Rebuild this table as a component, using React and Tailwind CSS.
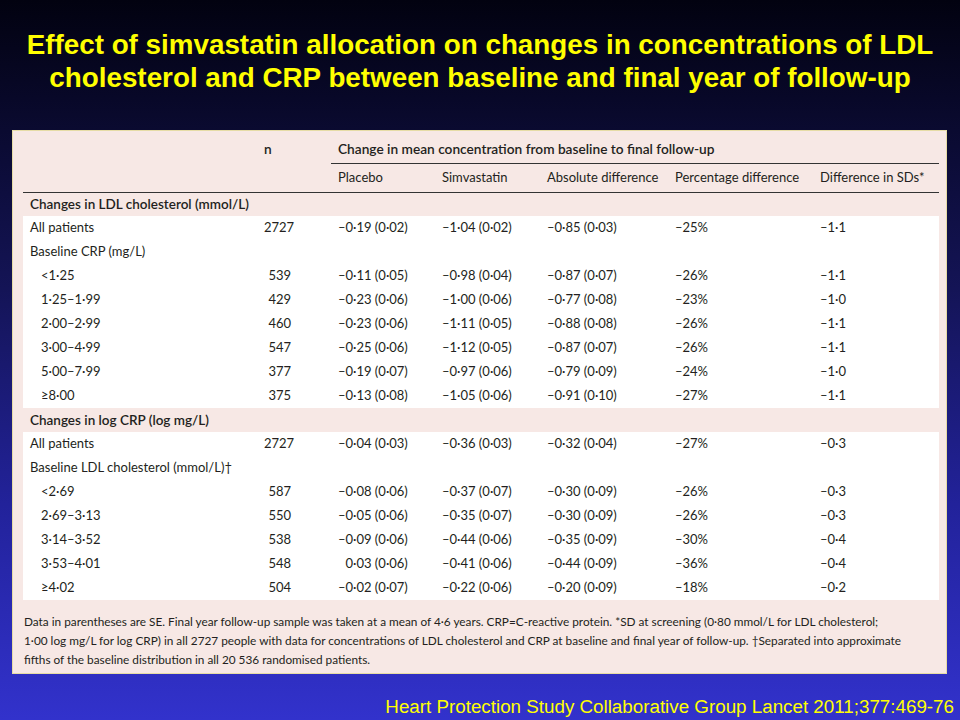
import React from "react";

const ldlRows = [
  ["<1·25", "539", "–0·11 (0·05)", "–0·98 (0·04)", "–0·87 (0·07)", "–26%", "–1·1"],
  ["1·25–1·99", "429", "–0·23 (0·06)", "–1·00 (0·06)", "–0·77 (0·08)", "–23%", "–1·0"],
  ["2·00–2·99", "460", "–0·23 (0·06)", "–1·11 (0·05)", "–0·88 (0·08)", "–26%", "–1·1"],
  ["3·00–4·99", "547", "–0·25 (0·06)", "–1·12 (0·05)", "–0·87 (0·07)", "–26%", "–1·1"],
  ["5·00–7·99", "377", "–0·19 (0·07)", "–0·97 (0·06)", "–0·79 (0·09)", "–24%", "–1·0"],
  ["≥8·00", "375", "–0·13 (0·08)", "–1·05 (0·06)", "–0·91 (0·10)", "–27%", "–1·1"],
];

const crpRows = [
  ["<2·69", "587", "–0·08 (0·06)", "–0·37 (0·07)", "–0·30 (0·09)", "–26%", "–0·3"],
  ["2·69–3·13", "550", "–0·05 (0·06)", "–0·35 (0·07)", "–0·30 (0·09)", "–26%", "–0·3"],
  ["3·14–3·52", "538", "–0·09 (0·06)", "–0·44 (0·06)", "–0·35 (0·09)", "–30%", "–0·4"],
  ["3·53–4·01", "548", "0·03 (0·06)", "–0·41 (0·06)", "–0·44 (0·09)", "–36%", "–0·4"],
  ["≥4·02", "504", "–0·02 (0·07)", "–0·22 (0·06)", "–0·20 (0·09)", "–18%", "–0·2"],
];

// keeps positive numbers lined up with the minus-signed ones
function Val({ v }) {
  if (v.startsWith("–")) return v;
  return (
    <>
      <span className="invisible">–</span>
      {v}
    </>
  );
}

function DataRow({ row, indent }) {
  const [label, n, ...vals] = row;
  return (
    <tr className="h-6 bg-white">
      <td className={indent ? "pl-[18px]" : "pl-[7px]"}>{label}</td>
      <td className="text-right">{n}</td>
      <td></td>
      {vals.map((v, i) => (
        <td key={i} className="pl-[7px]">
          <Val v={v} />
        </td>
      ))}
    </tr>
  );
}

function LabelRow({ text }) {
  return (
    <tr className="h-6 bg-white">
      <td colSpan={8} className="pl-[7px]">{text}</td>
    </tr>
  );
}

function SectionRow({ text }) {
  return (
    <tr className="h-6">
      <td colSpan={8} className="pl-[7px] font-semibold text-[13.5px]">{text}</td>
    </tr>
  );
}

export default function App() {
  return (
    <div className="w-[960px] h-[720px] overflow-hidden bg-[linear-gradient(to_bottom,#020210_0%,#0a0a30_18%,#141456_40%,#22229a_70%,#3232cc_100%)] font-['Liberation_Sans',Arial,sans-serif] flex flex-col">
      {/* ====== Title ====== */}
      <h1 className="pt-[28px] text-center text-[27.8px] leading-[33px] font-bold text-[#ffff00]">
        Effect of simvastatin allocation on changes in concentrations of LDL
        <br />
        cholesterol and CRP between baseline and final year of follow-up
      </h1>

      {/* ====== Table card ====== */}
      <div className="mt-[36px] mx-[12px] w-[935px] h-[544px] bg-[#f7e8e5] border border-[#e6dca6] px-[10px] pt-[5px] font-['Lato',sans-serif] text-[13px] text-[#231f20]">
        <table className="w-[916px] table-fixed border-collapse">
          <colgroup>
            <col className="w-[241px]" />
            <col className="w-[27px]" />
            <col className="w-[40px]" />
            <col className="w-[104px]" />
            <col className="w-[105px]" />
            <col className="w-[128px]" />
            <col className="w-[145px]" />
            <col />
          </colgroup>
          <thead>
            <tr className="h-[27px] font-semibold text-[13.7px]">
              <td></td>
              <td>n</td>
              <td></td>
              <td colSpan={5} className="pl-[7px] border-b border-[#333]">
                Change in mean concentration from baseline to final follow-up
              </td>
            </tr>
            <tr className="h-[29px] border-b border-[#333]">
              <td colSpan={3}></td>
              <td className="pl-[7px]">Placebo</td>
              <td className="pl-[7px]">Simvastatin</td>
              <td className="pl-[7px]">Absolute difference</td>
              <td className="pl-[7px]">Percentage difference</td>
              <td className="pl-[7px]">Difference in SDs*</td>
            </tr>
          </thead>
          <tbody>
            <SectionRow text="Changes in LDL cholesterol (mmol/L)" />
            <DataRow row={["All patients", "2727", "–0·19 (0·02)", "–1·04 (0·02)", "–0·85 (0·03)", "–25%", "–1·1"]} />
            <LabelRow text="Baseline CRP (mg/L)" />
            {ldlRows.map((r) => (
              <DataRow key={r[0]} row={r} indent />
            ))}
            <SectionRow text="Changes in log CRP (log mg/L)" />
            <DataRow row={["All patients", "2727", "–0·04 (0·03)", "–0·36 (0·03)", "–0·32 (0·04)", "–27%", "–0·3"]} />
            <LabelRow text="Baseline LDL cholesterol (mmol/L)†" />
            {crpRows.map((r) => (
              <DataRow key={r[0]} row={r} indent />
            ))}
          </tbody>
        </table>

        {/* ====== Footnote ====== */}
        <p className="mt-[12px] pl-px text-[11.8px] leading-[19px]">
          Data in parentheses are SE. Final year follow-up sample was taken at a mean of 4·6 years. CRP=C-reactive protein. *SD at screening (0·80 mmol/L for LDL cholesterol;
          <br />
          1·00 log mg/L for log CRP) in all 2727 people with data for concentrations of LDL cholesterol and CRP at baseline and final year of follow-up. †Separated into approximate
          <br />
          fifths of the baseline distribution in all 20 536 randomised patients.
        </p>
      </div>

      {/* ====== Citation ====== */}
      <p className="mt-auto mb-0 pr-[6px] text-right text-[18.8px] leading-[26px] text-[#ffff00]">
        Heart Protection Study Collaborative Group Lancet 2011;377:469-76
      </p>
    </div>
  );
}
